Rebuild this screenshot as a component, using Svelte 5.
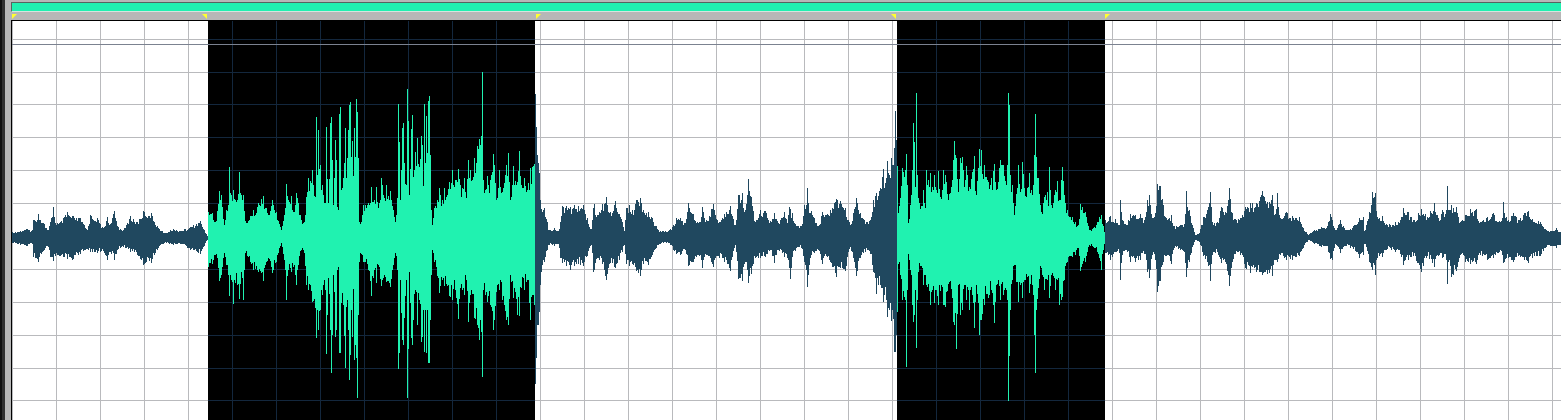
<script lang="ts">
  type Segment = { from: number; to: number; selected: boolean };

  const START = 12;
  const WIDTH = 1549;
  const MIDDLE = 237;

  // x, top, bottom of the signal at each measured peak or dip
  const peaks = `
    12 232 243, 20 231 245, 26 229 246, 32 230 244, 33 220 257, 38 214 262, 44 224 250, 48 230 247,
    50 222 257, 53 207 261, 55 223 256, 60 222 256, 67 212 259, 72 216 260, 80 218 254, 87 230 249, 90 215 252,
    97 218 253, 103 228 251, 107 217 260, 110 224 252, 114 211 260, 118 227 249, 123 230 247, 130 216 252, 137 222 255,
    143 211 265, 151 213 263, 157 226 250, 164 233 243, 173 229 245, 180 231 244, 190 227 250,
    200 221 254, 204 230 246, 207 236 240,
    208 212 267, 212 213 264, 215 222 255, 218 204 268, 219 191 281, 221 195 275, 224 225 253,
    226 210 265, 228 205 275, 229 167 296, 231 195 280, 233 190 304, 235 200 283, 237 200 285,
    239 172 299, 241 195 272, 243 195 300, 245 221 253, 250 216 262, 253 210 270, 258 203 272,
    263 196 281, 268 215 258, 272 200 273, 276 212 262, 281 230 243, 284 215 260, 286 184 300,
    288 200 270, 291 196 272, 294 212 265, 296 193 285, 298 203 265, 301 220 250, 304 222 253,
    306 197 285, 308 178 290, 312 170 302, 315 197 308, 316 117 338, 317 175 310, 318 130 330,
    320 165 310, 322 185 295, 325 203 290, 326 127 354, 328 203 278, 330 123 330, 331 117 373,
    332 160 335, 333 205 275, 335 140 337, 336 160 330, 337 207 270, 338 210 267, 339 114 353,
    340 107 353, 341 190 303, 343 178 305, 345 128 368, 346 178 307, 348 130 330, 349 105 380,
    350 102 355, 351 157 310, 352 141 337, 353 176 289, 354 128 360, 355 157 345, 356 99 358,
    357 112 398, 358 158 315, 359 222 262, 360 224 253, 363 205 262, 368 203 270, 371 187 296,
    374 200 270, 376 187 283, 378 208 265, 381 178 286, 384 198 275, 386 185 282, 390 191 287,
    393 210 265, 395 222 253, 397 198 270, 398 104 369, 399 142 353, 400 200 280, 401 170 313,
    402 128 340, 403 123 345, 404 163 318, 406 185 280, 407 89 398, 408 121 349, 409 195 272,
    411 129 338, 412 115 345, 413 177 320, 415 152 290, 417 138 325, 419 167 300, 421 136 342,
    422 145 337, 423 186 310, 424 104 352, 425 163 310, 426 116 353, 427 153 310, 428 101 363,
    429 96 363, 430 155 320, 431 210 275, 432 225 250, 434 208 262, 437 200 276, 439 188 293,
    442 200 280, 444 188 286, 449 182 296, 452 170 300, 455 180 290, 458 169 319, 460 185 288,
    464 178 295, 466 198 280, 468 160 322, 470 170 295, 474 158 318, 477 146 325, 479 139 340,
    480 145 320, 481 136 332, 482 72 377, 483 180 290, 487 176 302, 490 180 305, 493 154 330,
    494 165 320, 497 198 285, 499 170 290, 502 192 300, 506 165 320, 508 153 325, 510 200 275,
    513 166 298, 517 182 315, 519 151 316, 521 185 288, 524 178 290, 527 190 280, 530 168 320,
    534 164 305,
    535 94 384, 536 127 358, 537 155 325, 538 163 325, 539 173 312, 540 200 285, 542 212 265,
    544 208 262, 547 222 250, 548 230 245, 554 228 246, 558 231 244, 560 222 258, 562 206 263,
    566 206 266, 570 207 270, 574 205 266, 578 206 264, 583 205 266, 587 218 256, 591 229 245,
    593 208 272, 594 204 270, 597 215 258, 602 204 264, 606 197 280, 609 213 264, 615 201 268,
    619 214 260, 622 222 252, 624 231 245, 626 208 264, 629 205 266, 632 210 264, 636 200 271,
    640 198 276, 643 210 264, 648 212 265, 652 218 255, 656 226 248, 660 231 244, 668 231 243,
    673 225 250, 676 218 254, 680 218 255, 685 223 250, 688 203 266, 693 214 262, 699 222 256,
    702 207 268, 706 220 255, 713 204 267, 717 220 256, 724 214 262, 730 206 271, 735 225 245,
    738 195 279, 742 193 281, 745 210 262, 748 179 283, 751 197 274, 755 222 258, 760 210 258,
    765 211 257, 770 221 250, 774 213 263, 778 223 250, 784 212 257, 787 223 258, 789 207 268,
    790 209 279, 792 213 257, 797 226 247, 801 226 248, 804 205 262, 806 205 270, 807 188 287,
    808 203 275, 811 211 255, 818 226 250, 822 212 264, 826 215 256, 830 210 262, 836 199 277,
    840 201 268, 845 208 271, 850 225 247, 853 213 258, 856 198 276, 860 213 258, 867 222 250,
    870 220 254, 873 200 272, 876 193 294, 880 188 285, 883 169 302, 884 188 295, 887 161 317,
    889 175 310, 891 158 321, 892 165 310, 894 148 352, 895 111 352, 896 140 335,
    897 166 312, 898 213 264, 900 198 275, 902 168 300, 905 170 300, 906 154 367, 907 185 290,
    908 223 254, 910 205 270, 912 170 305, 913 123 322, 914 142 315, 915 187 290, 916 93 348,
    917 175 300, 918 198 272, 921 206 266, 923 190 285, 925 208 275, 926 170 285, 930 173 305,
    932 187 290, 934 175 303, 936 190 290, 938 171 305, 941 199 285, 943 170 305, 945 175 307,
    949 194 282, 953 160 322, 954 141 325, 956 158 349, 958 192 285, 960 158 315, 962 157 310,
    965 180 285, 966 166 300, 969 187 310, 972 172 295, 974 156 328, 976 195 285, 979 149 335,
    981 150 320, 984 165 305, 988 182 298, 991 178 290, 994 164 323, 996 190 285, 1000 160 300,
    1003 165 295, 1006 185 290, 1007 165 300, 1008 93 401, 1009 105 356, 1010 175 310,
    1012 185 280, 1014 215 265, 1018 165 302, 1020 192 285, 1022 162 298, 1025 196 280,
    1029 173 293, 1032 195 285, 1034 155 335, 1035 114 373, 1036 157 310, 1038 178 288,
    1041 212 268, 1044 197 290, 1047 192 280, 1048 206 275, 1049 167 298, 1051 205 275,
    1055 190 290, 1057 181 280, 1059 200 305, 1062 167 297, 1064 195 280, 1067 210 262,
    1072 217 257, 1075 222 255, 1078 225 248, 1080 204 271, 1082 207 264, 1085 212 262,
    1089 230 245, 1094 227 248, 1097 222 252, 1099 217 258, 1101 215 270, 1103 226 250,
    1104 232 244,
    1105 220 253, 1110 216 260, 1115 219 252, 1119 225 253, 1120 200 280, 1122 220 255,
    1126 225 250, 1130 214 262, 1135 215 262, 1140 214 260, 1144 220 254, 1147 200 272,
    1149 195 278, 1152 218 255, 1155 213 260, 1157 184 292, 1160 186 281, 1163 205 262,
    1166 218 256, 1171 215 264, 1174 226 248, 1180 225 250, 1184 224 252, 1186 191 277,
    1189 210 262, 1193 228 245, 1195 235 240, 1199 233 242, 1203 217 256, 1207 210 262,
    1210 192 281, 1212 222 255, 1217 222 252, 1221 207 263, 1225 212 262, 1229 188 286,
    1232 213 262, 1235 219 254, 1240 218 255, 1245 207 268, 1250 203 273, 1256 203 272,
    1262 191 275, 1267 202 274, 1272 195 276, 1275 214 260, 1277 193 262, 1280 218 255,
    1286 212 260, 1292 216 260, 1299 217 256, 1303 228 248, 1308 235 240, 1314 230 244,
    1321 227 247, 1326 228 246, 1330 214 259, 1332 220 260, 1335 230 244, 1340 220 253,
    1345 230 246, 1353 226 249, 1359 218 258, 1363 217 255, 1364 231 244, 1366 225 247,
    1369 212 262, 1372 192 270, 1375 193 275, 1377 217 258, 1382 216 257, 1387 225 249,
    1395 222 252, 1400 220 254, 1403 208 265, 1408 212 260, 1413 220 256, 1421 209 272,
    1427 217 256, 1434 203 267, 1438 218 256, 1442 210 258, 1446 210 260, 1447 186 284,
    1448 210 262, 1451 205 277, 1456 207 271, 1460 222 255, 1465 215 262, 1470 209 264,
    1476 209 264, 1480 222 255, 1487 217 260, 1493 213 258, 1498 222 253, 1502 218 255,
    1503 202 263, 1504 213 262, 1508 220 258, 1513 213 262, 1518 220 256, 1524 213 260,
    1528 211 263, 1532 219 258, 1540 222 256, 1545 229 248, 1550 231 246, 1556 228 248, 1560 232 245
  `.trim().split(",").map((entry) => entry.trim().split(/\s+/).map(Number));

  const segments: Segment[] = [
    { from: 12, to: 208, selected: false },
    { from: 208, to: 535, selected: true },
    { from: 535, to: 897, selected: false },
    { from: 897, to: 1105, selected: true },
    { from: 1105, to: 1561, selected: false },
  ];
  const selections = segments.filter((segment) => segment.selected);

  const columns = Array.from({ length: 36 }, (_, i) => START + i * 44);
  const rows = [39, 72, 104, 137, 170, 203, 236, 269, 302, 335, 368, 400];

  // small repeatable ripple for the samples that lie between two peaks
  function ripple(n: number) {
    const value = Math.sin(n * 12.9898) * 43758.5453;
    return 1 - (value - Math.floor(value)) * 0.26;
  }

  function sampleAt(x: number) {
    const next = Math.max(1, peaks.findIndex((peak) => peak[0] >= x));
    const [x0, top0, bottom0] = peaks[next - 1];
    const [x1, top1, bottom1] = peaks[next];
    if (x === x0) return [top0, bottom0];
    if (x === x1) return [top1, bottom1];
    const t = (x - x0) / (x1 - x0);
    const top = top0 + (top1 - top0) * t - MIDDLE;
    const bottom = bottom0 + (bottom1 - bottom0) * t - MIDDLE;
    return [
      Math.round(MIDDLE + top * ripple(x)),
      Math.round(MIDDLE + bottom * ripple(x + 0.5)),
    ];
  }

  function wavePath({ from, to }: Segment) {
    let d = "";
    for (let x = from; x < to; x++) {
      const [top, bottom] = sampleAt(x);
      d += `M${x} ${top}h1V${bottom}h-1z`;
    }
    return d;
  }
</script>

<main class="editor">
  <div class="edge"></div>
  <section class="track" aria-label="Audio track">
    <div class="overview"></div>
    <svg class="ruler" viewBox="{START} 13 {WIDTH} 7" preserveAspectRatio="none" aria-hidden="true">
      <path d="M12 14h5l-5 5z" />
      <path d="M202 14h5v5z" />
      <path d="M536 14h5l-5 5z" />
      <path d="M891 14h5v5z" />
      <path d="M1105 14h5l-5 5z" />
    </svg>
    <svg
      class="wave"
      viewBox="{START} 21 {WIDTH} 399"
      preserveAspectRatio="none"
      role="img"
      aria-label="Waveform with two selected regions"
    >
      {#each selections as { from, to }}
        <rect class="selection" x={from} y="21" width={to - from} height="399" />
      {/each}
      <g class="grid">
        {#each columns as x}
          <rect {x} y="21" width="1" height="399" />
        {/each}
        {#each rows as y}
          <rect x={START} {y} width={WIDTH} height="1" />
        {/each}
      </g>
      <g class="grid dark">
        {#each selections as { from, to }}
          {#each columns.filter((x) => x >= from && x < to) as x}
            <rect {x} y="21" width="1" height="399" />
          {/each}
          {#each rows as y}
            <rect x={from} {y} width={to - from} height="1" />
          {/each}
        {/each}
      </g>
      <rect class="limit" x={START} y="44" width={WIDTH} height="1" />
      {#each segments as segment}
        <path class="signal" class:selected={segment.selected} d={wavePath(segment)} />
      {/each}
    </svg>
  </section>
</main>

<style>
  :global(body) {
    margin: 0;
    background: #b7b7b7;
  }

  .editor {
    height: 100vh;
    display: grid;
    grid-template-columns: 5px minmax(0, 1fr);
  }

  .edge {
    background: #303030;
    border-left: 2px solid #101010;
    box-sizing: border-box;
  }

  .track {
    display: flex;
    flex-direction: column;
    min-width: 0;
    padding-left: 6px;
    padding-top: 2px;
    background: #b7b7b7;
  }

  .overview {
    height: 8px;
    flex: none;
    background: #20f0b0;
    border-top: 1px solid #56645f;
    border-left: 1px solid #56645f;
    border-bottom: 1px solid #d5e5df;
  }

  .ruler {
    height: 7px;
    flex: none;
    margin: 1px 0 0 1px;
    fill: #ffff30;
  }

  .wave {
    flex: 1;
    width: 100%;
    min-height: 0;
    box-sizing: border-box;
    background: #fff;
    border-top: 1px solid #000;
    border-left: 1px solid #000;
    shape-rendering: crispEdges;
  }

  .grid {
    fill: #b9babd;
  }

  .grid.dark {
    fill: #13273d;
  }

  .limit {
    fill: #7b8290;
  }

  .signal {
    fill: #20485f;
  }

  .signal.selected {
    fill: #20f2b0;
  }
</style>
